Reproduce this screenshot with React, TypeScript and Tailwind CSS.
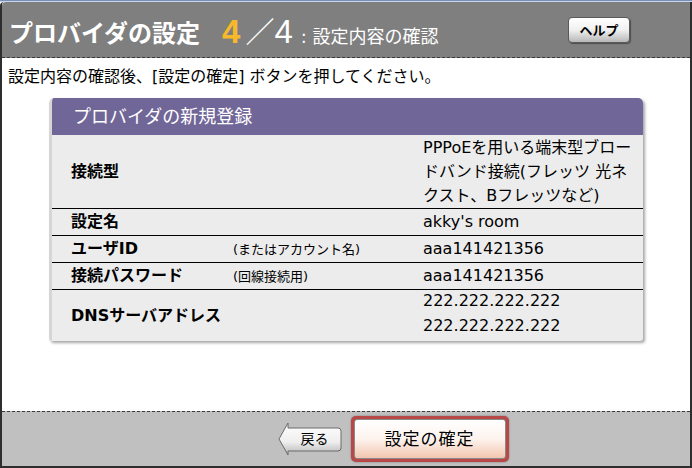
import React from 'react';

const jp = "font-['DejaVu_Sans','Noto_Sans_CJK_JP',sans-serif]";

const rows = [
  { label: '設定名', sub: '', value: "akky's room" },
  { label: 'ユーザID', sub: '(またはアカウント名)', value: 'aaa141421356' },
  { label: '接続パスワード', sub: '(回線接続用)', value: 'aaa141421356' },
];

export default function App() {
  return (
    <div className={`w-[692px] h-[468px] bg-white flex flex-col ${jp} text-black overflow-hidden`}>
      <div className="h-[2px] bg-[#c9d6ea] border-t border-[#7a8fb5]" />
      <div className="flex-1 flex flex-col border-x-2 border-b-2 border-[#2e2e2e] rounded-tl-[4px]">
        {/* Header */}
        <div className="h-[56px] bg-[#7f7f7f] border-b border-dashed border-[#3a3a3a] flex items-end pb-[9px] pl-[7px] pr-[60px] rounded-tl-[4px]">
          <span className="text-[24px] font-bold text-white leading-none pb-[2px]">プロバイダの設定</span>
          <span className="ml-[22px] text-[33px] font-bold text-[#f6b92b] leading-none font-['Liberation_Sans',sans-serif]">4</span>
          <span className="ml-[5px] text-[29px] text-white leading-none">／</span>
          <span className="text-[33px] text-white leading-none font-['Liberation_Sans',sans-serif]">4</span>
          <span className="ml-[8px] text-[18px] text-white leading-none pb-[2px]">: 設定内容の確認</span>
          <div className="ml-auto self-start mt-[15px] w-[62px] h-[26px] rounded-[4px] border border-[#5a5a5a] bg-gradient-to-b from-white via-[#f0f0f0] to-[#b8b8b8] shadow-[1px_1px_1px_rgba(0,0,0,0.4)] flex items-center justify-center text-[13px] font-bold leading-none">
            ヘルプ
          </div>
        </div>

        {/* Body */}
        <div className="flex-1 pt-[9px]">
          <p className="pl-[6px] text-[16px] leading-[20px]">設定内容の確認後、[設定の確定] ボタンを押してください。</p>

          <div className="mt-[11px] ml-[47px] w-[594px] rounded-t-[5px] rounded-b-[3px] bg-[#ececec] border-l-[3px] border-[#d6d6d6] shadow-[2px_2px_3px_rgba(0,0,0,0.35)] overflow-hidden">
            <div className="h-[37px] -ml-[3px] bg-[#716698] flex items-center pl-[24px] text-[18px] text-white leading-none">
              プロバイダの新規登録
            </div>

            {/* 接続型 */}
            <div className="flex items-center h-[74px] border-b border-black">
              <div className="w-[371px] pl-[19px] text-[16px] font-bold">接続型</div>
              <div className="w-[214px] text-[16px] leading-[24px] pt-[1px]">
                PPPoEを用いる端末型ブロードバンド接続(フレッツ 光ネクスト、Bフレッツなど)
              </div>
            </div>

            {rows.map((r) => (
              <div key={r.label} className="flex items-center h-[27px] border-b border-black">
                <div className="w-[181px] pl-[19px] text-[16px] font-bold leading-none">{r.label}</div>
                <div className="w-[190px] text-[13px] leading-none">{r.sub}</div>
                <div className="text-[16px] leading-none">{r.value}</div>
              </div>
            ))}

            {/* DNS */}
            <div className="flex items-center h-[51px] pb-[2px]">
              <div className="w-[371px] pl-[19px] text-[16px] font-bold leading-none pt-[3px]">DNSサーバアドレス</div>
              <div className="text-[16px] leading-[25px] -mt-[4px]">
                <div>222.222.222.222</div>
                <div>222.222.222.222</div>
              </div>
            </div>
          </div>
        </div>

        {/* Footer */}
        <div className="h-[55px] bg-[#c0c0c0] border-t border-dashed border-[#3a3a3a] flex items-center justify-center gap-[9px] pl-[94px]">
          <div className="relative w-[64px] h-[34px] flex items-center justify-center">
            <svg className="absolute inset-0" width="64" height="34" viewBox="0 0 64 34">
              <defs>
                <linearGradient id="bk" x1="0" y1="0" x2="0" y2="1">
                  <stop offset="0" stopColor="#ffffff" />
                  <stop offset="0.6" stopColor="#eeeeee" />
                  <stop offset="1" stopColor="#b5b5b5" />
                </linearGradient>
              </defs>
              <path d="M1 17 L10 1 L10 6 L60 6 Q63 6 63 9 L63 26 Q63 29 60 29 L10 29 L10 33 Z" fill="url(#bk)" stroke="#6a6a6a" strokeWidth="1" />
            </svg>
            <span className="relative ml-[10px] text-[14px] leading-none">戻る</span>
          </div>
          <div className="w-[158px] h-[46px] rounded-[5px] bg-[#b84848] p-[3px] shadow-[0_0_2px_rgba(0,0,0,0.4)]">
            <div className="w-full h-full rounded-[3px] border border-[#8a8a8a] bg-gradient-to-b from-white via-[#fdf3ee] to-[#f2c6b0] flex items-center justify-center text-[17px] leading-none tracking-[1px]">
              設定の確定
            </div>
          </div>
        </div>
      </div>
    </div>
  );
}
